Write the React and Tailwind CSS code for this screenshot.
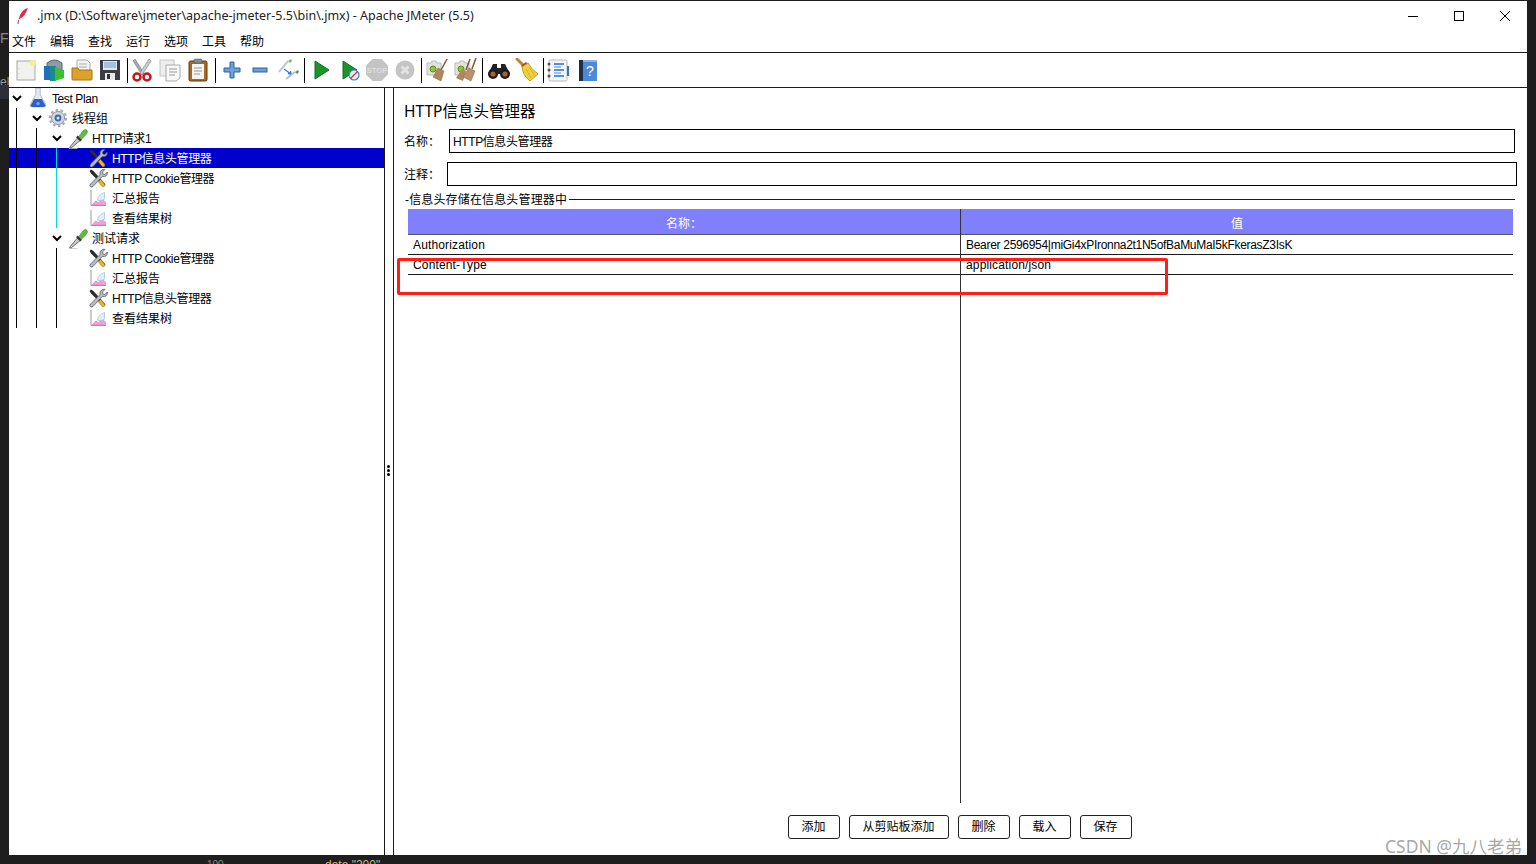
const cjk = "font-['Liberation_Sans','Noto_Sans_CJK_SC',sans-serif]";

const FlaskIcon = () => (
  <svg width="20" height="20" viewBox="0 0 18 18">
    <path d="M7 0h4v6l5 9q.5 2-1.500 2h-11q-2 0-1.500-2l5-9z" fill="#e4e8f0" stroke="#a8b0be" strokeWidth="0.800" />
    <path d="M5.500 10h7l3 5.500q0 1.500-1.500 1.500h-10q-1.500 0-1.500-1.500z" fill="#2a62c8" />
    <circle cx="9" cy="14" r="1.500" fill="#7aa5ee" />
  </svg>
);

const GearIcon = () => (
  <svg width="20" height="20" viewBox="0 0 20 20">
    <circle cx="10" cy="10" r="6.500" fill="#d5d8dc" stroke="#8d9298" strokeWidth="1" />
    <circle cx="10" cy="10" r="8" fill="none" stroke="#a8acb2" strokeWidth="2.200" strokeDasharray="2.600 2.400" />
    <circle cx="10" cy="10" r="3.400" fill="#3b66b8" />
    <circle cx="10" cy="10" r="1.500" fill="#dfe8f6" />
  </svg>
);

const DropperIcon = () => (
  <svg width="21" height="21" viewBox="0 0 20 20">
    <path d="M1 19.500h8" stroke="#c5c5c5" strokeWidth="0.800" />
    <path d="M1.500 18.500l7.500-9 2.500 2.500-8.500 7z" fill="#c9ced2" stroke="#555" strokeWidth="0.800" />
    <path d="M8.500 8l4 4" stroke="#333" strokeWidth="2.200" />
    <path d="M10.500 8l3.500-5q2-2.500 4-1 1.500 2-.5 4l-4.500 4.500z" fill="#63b946" stroke="#3c8a2a" strokeWidth="0.600" />
  </svg>
);

const ToolsIcon = () => (
  <svg width="20" height="20" viewBox="0 0 20 20">
    <path d="M3 1.500l2.500 1.500 12 13.500-1.800 1.800L3 5.500 1.500 3z" fill="#2d2d2d" />
    <path d="M12.500 11.500l4 4.500q1 1.800-.3 2.500-1 .8-2.400-.6l-3.600-4.200z" fill="#f0b820" stroke="#8a6a10" strokeWidth="0.500" />
    <path d="M2 16.500L12 6.500q-.6-3 1.500-4.500 1.500-1 3.500-.6l-2.500 2.600.4 2 2 .5 2.500-2.500q.3 2.400-1.200 3.800-1.500 1.300-4 .8L5 18.500q-1.500 1-2.600 0-1-1 .1-2z" fill="#b5bcc4" stroke="#4a4f55" strokeWidth="0.700" />
  </svg>
);

const ChartIcon = () => (
  <svg width="18" height="18" viewBox="0 0 18 18">
    <path d="M2 1v15.500h15" fill="none" stroke="#9a9a9a" strokeWidth="1" />
    <path d="M3 16l3.500-4 3 1.500 3.500-3.500 3.500 3v3z" fill="#f4a0d8" stroke="#d870b8" strokeWidth="0.500" />
    <path d="M8.500 11q.5-5 7-7.500v6.500q-3 2-5 1.500z" fill="#e2eefc" stroke="#9fbbe0" strokeWidth="0.700" />
  </svg>
);

const Chevron = () => (
  <svg width="10" height="7" viewBox="0 0 10 7">
    <path d="M1 1l4 4 4-4" fill="none" stroke="#000" strokeWidth="2" />
  </svg>
);

const icons = {
  flask: <FlaskIcon />,
  gear: <GearIcon />,
  dropper: <DropperIcon />,
  tools: <ToolsIcon />,
  chart: <ChartIcon />,
};

const indent = ["pl-[1px]", "pl-[21px]", "pl-[41px]", "pl-[61px]"];

const treeRows = [
  { label: "Test Plan", icon: "flask", depth: 0, open: true, tight: true },
  { label: "线程组", icon: "gear", depth: 1, open: true },
  { label: "HTTP请求1", icon: "dropper", depth: 2, open: true, tight: true },
  { label: "HTTP信息头管理器", icon: "tools", depth: 3, selected: true, tight: true },
  { label: "HTTP Cookie管理器", icon: "tools", depth: 3, tight: true },
  { label: "汇总报告", icon: "chart", depth: 3 },
  { label: "查看结果树", icon: "chart", depth: 3 },
  { label: "测试请求", icon: "dropper", depth: 2, open: true },
  { label: "HTTP Cookie管理器", icon: "tools", depth: 3, tight: true },
  { label: "汇总报告", icon: "chart", depth: 3 },
  { label: "HTTP信息头管理器", icon: "tools", depth: 3, tight: true },
  { label: "查看结果树", icon: "chart", depth: 3 },
];

const TreeRow = ({ row }) => (
  <div className={`h-5 flex items-center ${indent[row.depth]} ${row.selected ? "bg-[#0000cc]" : ""}`}>
    <span className="w-[14px] flex justify-center shrink-0">{row.open && <Chevron />}</span>
    <span className="w-[28px] flex justify-center shrink-0">{icons[row.icon]}</span>
    <span className={`text-xs whitespace-nowrap pt-px ${row.tight ? "tracking-[-0.4px]" : ""} ${row.selected ? "text-white" : "text-black"}`}>{row.label}</span>
  </div>
);

const tb = {
  newFile: (
    <svg width="24" height="24" viewBox="0 0 24 24">
      <rect x="3" y="3" width="18" height="19" fill="#f2f2ec" stroke="#a8a8a0" />
      <circle cx="19" cy="5" r="3" fill="#f6ee90" />
      <path d="M5 10v.5M5 15v.5" stroke="#999" />
    </svg>
  ),
  templates: (
    <svg width="24" height="24" viewBox="0 0 24 24">
      <path d="M5 5q7-6 15 0v10H5z" fill="#8f9aa2" stroke="#59636b" />
      <path d="M2 8h6v14H2z" fill="#1f6fc0" />
      <path d="M8 8h6v15H8z" fill="#1a8a8a" />
      <path d="M13 9l9 3v8l-9 3z" fill="#3cc030" />
    </svg>
  ),
  open: (
    <svg width="24" height="24" viewBox="0 0 24 24">
      <path d="M7 2h10l3 3v8H7z" fill="#f4f4f4" stroke="#aaa" />
      <path d="M9 6h8M9 9h8" stroke="#aaa" />
      <path d="M2 10h6l1 2h13v9q0 1-1 1H3q-1 0-1-1z" fill="#dca32c" stroke="#a87410" />
    </svg>
  ),
  save: (
    <svg width="24" height="24" viewBox="0 0 24 24">
      <path d="M2 2h20v20H2z" fill="#3a3e44" />
      <path d="M5 3h14v9H5z" fill="#dfe7f0" />
      <path d="M6 5h12M6 7h12M6 9h12" stroke="#6e98c8" />
      <path d="M7 15h10v7H7z" fill="#e8e8e8" />
      <path d="M9 16h3v5H9z" fill="#333" />
    </svg>
  ),
  cut: (
    <svg width="24" height="24" viewBox="0 0 24 24">
      <path d="M5 1l9 14-2 2L3 3z" fill="#a8acb0" stroke="#666" strokeWidth="0.500" />
      <path d="M19 1l-9 14 2 2 9-14z" fill="#c8ccd0" stroke="#666" strokeWidth="0.500" />
      <circle cx="7" cy="19" r="3.500" fill="none" stroke="#c4161c" strokeWidth="2.500" />
      <circle cx="17" cy="19" r="3.500" fill="none" stroke="#c4161c" strokeWidth="2.500" />
    </svg>
  ),
  copy: (
    <svg width="24" height="24" viewBox="0 0 24 24">
      <rect x="2" y="2" width="14" height="16" fill="#eee" stroke="#c4c4c4" />
      <path d="M8 7h14v13l-4 3H8z" fill="#f8f8f8" stroke="#aaa" />
      <path d="M11 11h8M11 14h8M11 17h6" stroke="#999" />
    </svg>
  ),
  paste: (
    <svg width="24" height="24" viewBox="0 0 24 24">
      <rect x="3" y="3" width="18" height="20" rx="1.500" fill="#a86a20" stroke="#5c3a10" />
      <path d="M6 6h12v15H6z" fill="#f4f4f4" />
      <path d="M8 10h8M8 13h8M8 16h6" stroke="#999" />
      <rect x="8" y="1" width="8" height="4" rx="1" fill="#888" stroke="#555" strokeWidth="0.500" />
    </svg>
  ),
  plus: (
    <svg width="24" height="24" viewBox="0 0 24 24">
      <path d="M10 4h4v6h6v4h-6v6h-4v-6H4v-4h6z" fill="#6f9fd8" stroke="#2f5f9f" />
    </svg>
  ),
  minus: (
    <svg width="24" height="24" viewBox="0 0 24 24">
      <rect x="5" y="10" width="14" height="4" fill="#6f9fd8" stroke="#2f5f9f" />
    </svg>
  ),
  toggle: (
    <svg width="24" height="24" viewBox="0 0 24 24">
      <path d="M3 14l9-11" stroke="#c8c8c8" strokeWidth="2" />
      <path d="M12 3l3-2 1 2-2 2z" fill="#7ab86a" />
      <path d="M10 21l9-7" stroke="#c0c0c0" strokeWidth="2" />
      <path d="M19 14l3-2 1 2-2 2z" fill="#4ca040" />
      <path d="M8 11l7 5M15 16l-3-.5M15 16l-.5-3" stroke="#2f7fd8" strokeWidth="1.300" fill="none" />
    </svg>
  ),
  play: (
    <svg width="24" height="24" viewBox="0 0 24 24">
      <path d="M6 3l14 9-14 9z" fill="#18962a" stroke="#0f6e1c" />
    </svg>
  ),
  playNoTimer: (
    <svg width="24" height="24" viewBox="0 0 24 24">
      <path d="M6 3l14 9-14 9z" fill="#18962a" stroke="#0f6e1c" />
      <circle cx="17" cy="17" r="5" fill="#e8f0fa" stroke="#3d78c8" strokeWidth="1.200" />
      <path d="M13.500 20.500l7-7" stroke="#d8301f" strokeWidth="1.200" />
    </svg>
  ),
  stop: (
    <svg width="24" height="24" viewBox="0 0 24 24">
      <path d="M7.500 1h9L23 7.500v9L16.500 23h-9L1 16.500v-9z" fill="#c4c4c4" />
      <text x="12" y="15" textAnchor="middle" fontSize="7.500" fontWeight="700" fill="#dedede" fontFamily="Liberation Sans">STOP</text>
    </svg>
  ),
  shutdown: (
    <svg width="24" height="24" viewBox="0 0 24 24">
      <circle cx="12" cy="12" r="9.500" fill="#c4c4c4" />
      <path d="M8.500 8.500l7 7M15.500 8.500l-7 7" stroke="#e4e4e4" strokeWidth="2.600" />
    </svg>
  ),
  clear: (
    <svg width="24" height="24" viewBox="0 0 24 24">
      <path d="M2 5h4l1-2h4l1 2h4v12H2z" fill="#e2e2dc" stroke="#bbb" />
      <circle cx="8" cy="11" r="3" fill="#8cc83c" stroke="#5a9020" />
      <path d="M22 1l-6 11" stroke="#7c5a32" strokeWidth="1.500" />
      <path d="M13 10l6 3-3 10-8-4z" fill="#b0875c" stroke="#8a6238" strokeWidth="0.500" />
    </svg>
  ),
  clearAll: (
    <svg width="24" height="24" viewBox="0 0 24 24">
      <path d="M2 5h4l1-2h4l1 2h4v12H2z" fill="#e2e2dc" stroke="#bbb" />
      <circle cx="8" cy="11" r="3" fill="#8cc83c" stroke="#5a9020" />
      <path d="M17 1l-4 11M23 0l-4 11" stroke="#7c5a32" strokeWidth="1.500" />
      <path d="M9 11l4 2-3 10-7-3z" fill="#b0875c" />
      <path d="M16 10l6 3-4 10-8-4z" fill="#b8906a" stroke="#8a6238" strokeWidth="0.500" />
    </svg>
  ),
  search: (
    <svg width="24" height="24" viewBox="0 0 24 24">
      <path d="M6 6h4v4h4V6h4l5 10H1z" fill="#222" />
      <circle cx="6" cy="16" r="5" fill="#1c1c1c" />
      <circle cx="18" cy="16" r="5" fill="#1c1c1c" />
      <circle cx="6" cy="16" r="2.600" fill="#a8642c" />
      <circle cx="18" cy="16" r="2.600" fill="#a8642c" />
    </svg>
  ),
  broom: (
    <svg width="24" height="24" viewBox="0 0 24 24">
      <path d="M2 1l7 7" stroke="#b8863c" strokeWidth="3" strokeLinecap="round" />
      <path d="M6 8l5-4 2 2-5 4z" fill="#d8201c" />
      <path d="M7 9l6-4q3 6 10 11l-8 7q-7-5-8-14z" fill="#f0d040" stroke="#c0a020" />
      <path d="M11 11l5 9M14 9l6 9" stroke="#c8a828" strokeWidth="0.700" />
    </svg>
  ),
  functions: (
    <svg width="24" height="24" viewBox="0 0 24 24">
      <rect x="3" y="2" width="18" height="21" rx="1.500" fill="#f4f6fa" stroke="#b4b8c0" />
      <path d="M8 6h10M8 12h10M8 18h10" stroke="#1f6fe0" strokeWidth="1.500" />
      <path d="M8 9h7M8 15h7" stroke="#1f6fe0" strokeWidth="0.800" />
      <circle cx="3" cy="6" r="1.500" fill="#555" />
      <circle cx="3" cy="12" r="1.500" fill="#555" />
      <circle cx="3" cy="18" r="1.500" fill="#555" />
      <path d="M21 13h2v5h-2z" fill="#2f8f3a" />
      <path d="M21 8h2v5h-2z" fill="#2f6fe0" />
    </svg>
  ),
  help: (
    <svg width="24" height="24" viewBox="0 0 24 24">
      <path d="M3 2h18v21H3z" fill="#4a8ad8" />
      <path d="M3 2h4v21H3z" fill="#1e2e44" />
      <path d="M7 2h14v2H7z" fill="#8ab4e8" />
      <text x="14" y="18" textAnchor="middle" fontSize="14" fill="#fff" fontFamily="Liberation Sans">?</text>
    </svg>
  ),
};

const ToolBtn = ({ icon }) => <div className="w-7 h-[34px] flex items-center justify-center shrink-0">{tb[icon]}</div>;

const Sep = ({ className }) => <div className={`w-px h-[25px] bg-black shrink-0 ${className}`} />;

const menus = ["文件", "编辑", "查找", "运行", "选项", "工具", "帮助"];
const buttons = [
  { label: "添加", w: "w-[52px]" },
  { label: "从剪贴板添加", w: "w-[100px]" },
  { label: "删除", w: "w-[52px]" },
  { label: "载入", w: "w-[52px]" },
  { label: "保存", w: "w-[52px]" },
];

export default function App() {
  return (
    <div className={`relative h-[864px] w-[1536px] overflow-hidden bg-[#1e1e1e] ${cjk}`}>
      {/* bits of the editor behind the window */}
      <span className="absolute left-0 top-[28px] text-sm text-[#8a8a8a]">F</span>
      <span className="absolute left-0 top-[74px] text-xs text-[#9a9a9a]">el</span>
      <div className="absolute left-0 top-[85px] w-[9px] h-[14px] bg-[#2c2f36]" />
      <span className="absolute left-[207px] top-[857px] text-[10px] text-[#8a8a8a]">100</span>
      <span className="absolute left-[325px] top-[857px] text-xs text-[#c8b48a]">data "200"</span>

      <div className="relative ml-[9px] mt-px w-[1518px] h-[854px] bg-white flex flex-col">
        {/* title bar */}
        <div className="h-[30px] flex items-center shrink-0">
          <svg className="ml-[8px]" width="12" height="18" viewBox="0 0 12 18">
            <path d="M11 1Q6 2 3 8L1.500 13 4 11Q8 9 11 1z" fill="#d8304a" />
            <path d="M1.500 13L1 17" stroke="#8a4a70" strokeWidth="1" />
          </svg>
          <span className="ml-[8px] text-[12.500px] text-[#222] whitespace-nowrap font-['Noto_Sans',sans-serif]">.jmx (D:\Software\jmeter\apache-jmeter-5.5\bin\.jmx) - Apache JMeter (5.5)</span>
          <div className="ml-auto flex">
            <div className="w-[46px] h-[30px] flex items-center justify-center">
              <svg width="10" height="10" viewBox="0 0 10 10"><path d="M0 5.500h10" stroke="#000" /></svg>
            </div>
            <div className="w-[46px] h-[30px] flex items-center justify-center">
              <svg width="10" height="10" viewBox="0 0 10 10"><rect x="0.500" y="0.500" width="9" height="9" fill="none" stroke="#000" /></svg>
            </div>
            <div className="w-[45px] h-[30px] flex items-center justify-center">
              <svg width="10" height="10" viewBox="0 0 10 10"><path d="M0 0l10 10M10 0L0 10" stroke="#000" /></svg>
            </div>
          </div>
        </div>

        {/* menu bar */}
        <div className="h-[22px] flex items-center gap-[14px] pl-[3px] pt-px border-b border-[#1a1a1a] shrink-0">
          {menus.map(m => <span key={m} className="text-xs text-black">{m}</span>)}
        </div>

        {/* toolbar */}
        <div className="h-[35px] flex items-center pl-[3px] border-b border-[#1a1a1a] shrink-0">
          <ToolBtn icon="newFile" />
          <ToolBtn icon="templates" />
          <ToolBtn icon="open" />
          <ToolBtn icon="save" />
          <Sep className="ml-[3px]" />
          <ToolBtn icon="cut" />
          <ToolBtn icon="copy" />
          <ToolBtn icon="paste" />
          <Sep className="ml-[3px] mr-[2px]" />
          <ToolBtn icon="plus" />
          <ToolBtn icon="minus" />
          <ToolBtn icon="toggle" />
          <Sep className="ml-[2px] mr-[2px]" />
          <ToolBtn icon="play" />
          <ToolBtn icon="playNoTimer" />
          <ToolBtn icon="stop" />
          <ToolBtn icon="shutdown" />
          <Sep className="ml-[2px] mr-[1px]" />
          <ToolBtn icon="clear" />
          <ToolBtn icon="clearAll" />
          <Sep className="ml-[3px] mr-[2px]" />
          <ToolBtn icon="search" />
          <ToolBtn icon="broom" />
          <Sep className="ml-[2px]" />
          <ToolBtn icon="functions" />
          <div className="w-[2px]" />
          <ToolBtn icon="help" />
        </div>

        <div className="flex flex-1 min-h-0">
          {/* test plan tree */}
          <div className="relative w-[376px] border-r border-[#1a1a1a] shrink-0">
            {treeRows.map((row, i) => <TreeRow key={i} row={row} />)}
            <div className="absolute left-[7px] top-[20px] w-px h-[220px] bg-black" />
            <div className="absolute left-[27px] top-[40px] w-px h-[200px] bg-black" />
            <div className="absolute left-[47px] top-[60px] w-px h-[80px] bg-[#00d8d8]" />
            <div className="absolute left-[47px] top-[160px] w-px h-[80px] bg-black" />
          </div>

          {/* sash */}
          <div className="w-[9px] border-r border-[#1a1a1a] flex flex-col items-center justify-center gap-px shrink-0 pb-[2px] pr-px">
            {[0, 1, 2].map(i => <span key={i} className="w-[3px] h-[3px] rounded-full bg-black" />)}
          </div>

          {/* header manager panel */}
          <div className="flex-1 min-w-0 flex flex-col pl-[10px] pr-[10px]">
            <div className="h-[41px] pt-[12px] text-[15.500px] leading-[22px] text-black shrink-0 font-['Noto_Sans','Noto_Sans_CJK_SC',sans-serif]">HTTP信息头管理器</div>
            <div className="h-[24px] flex items-center shrink-0">
              <span className="w-[45px] text-xs text-black pt-[2px]">名称：</span>
              <div className="w-[1066px] h-[24px] border border-black flex items-center pl-[3px] pt-[2px] text-xs text-black tracking-[-0.4px]">HTTP信息头管理器</div>
            </div>
            <div className="h-[24px] mt-[9px] flex items-center shrink-0">
              <span className="w-[43px] text-xs text-black pt-[2px]">注释：</span>
              <div className="w-[1070px] h-[24px] border border-black" />
            </div>
            <div className="h-[23px] flex items-center shrink-0 pr-[2px] pl-px pt-[3px]">
              <span className="text-xs text-black whitespace-nowrap pt-px tracking-[0.15px]">-信息头存储在信息头管理器中</span>
              <div className="flex-1 h-px bg-[#1a1a1a] ml-[2px]" />
            </div>

            {/* table */}
            <div className="flex ml-[4px] w-[1105px] h-[594px] shrink-0">
              <div className="w-[552px] shrink-0">
                <div className="h-[26px] bg-[#8080ff] border-b border-[#555] pt-[4px] flex items-center justify-center text-xs text-white">名称：</div>
                <div className="h-5 border-b border-[#1a1a1a] flex items-center pl-[5px] text-xs text-black tracking-[0.15px]">Authorization</div>
                <div className="h-5 border-b border-[#1a1a1a] flex items-center pl-[5px] pt-px text-xs text-black tracking-[0.15px]">Content-Type</div>
              </div>
              <div className="flex-1 border-l border-[#333]">
                <div className="h-[26px] bg-[#8080ff] border-b border-[#555] pt-[4px] flex items-center justify-center text-xs text-white">值</div>
                <div className="h-5 border-b border-[#1a1a1a] flex items-center pl-[5px] text-xs text-black whitespace-nowrap tracking-[-0.3px]">Bearer 2596954|miGi4xPIronna2t1N5ofBaMuMaI5kFkerasZ3IsK</div>
                <div className="h-5 border-b border-[#1a1a1a] flex items-center pl-[5px] pt-px text-xs text-black tracking-[0.15px]">application/json</div>
              </div>
            </div>

            <div className="flex justify-center gap-[9px] mt-[12px] pr-[2px]">
              {buttons.map(b => (
                <div key={b.label} className={`${b.w} h-6 border border-[#222] rounded-[3px] flex items-center justify-center text-xs text-black`}>{b.label}</div>
              ))}
            </div>
          </div>
        </div>

        {/* annotation drawn over the screenshot */}
        <div className="absolute left-[388px] top-[257px] w-[771px] h-[37px] border-[3px] border-[#ff1f17] rounded-[2px]" />
      </div>

      <span className="absolute right-[14px] top-[833px] text-[17.500px] text-[#8f8f8f]/80 whitespace-nowrap font-['Noto_Sans','Noto_Sans_CJK_SC',sans-serif]">CSDN @九八老弟</span>
    </div>
  );
}
